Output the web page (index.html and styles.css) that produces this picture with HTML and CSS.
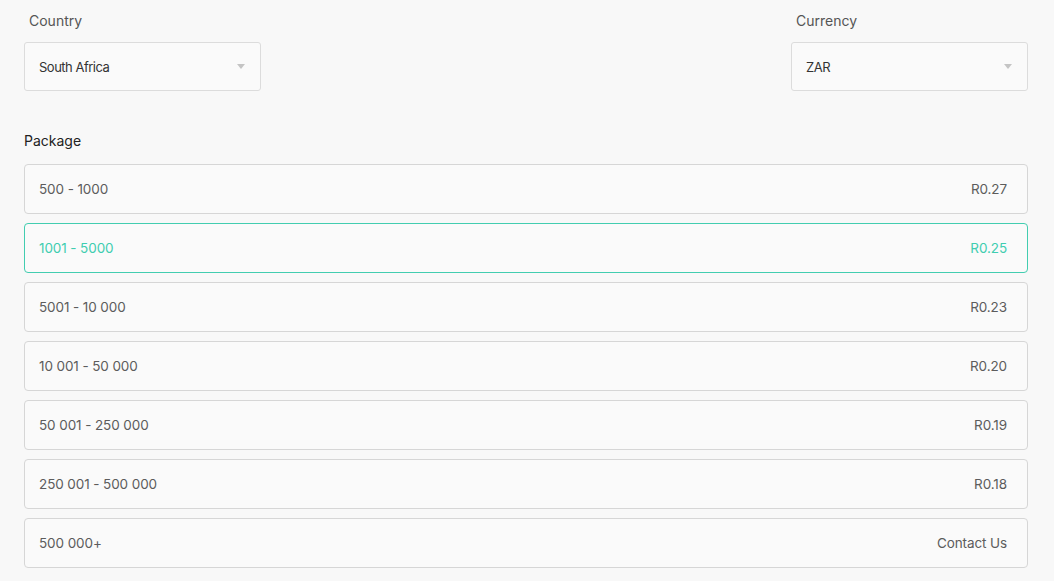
FILE: index.html
```html
<!DOCTYPE html>
<html>
<head>
<meta charset="utf-8">
<link rel="stylesheet" href="styles.css">
</head>
<body>
<div class="page">
  <div class="selects">
    <div class="field">
      <div class="label">Country</div>
      <div class="select">
        <span class="select-value">South Africa</span>
        <span class="caret"></span>
      </div>
    </div>
    <div class="field">
      <div class="label">Currency</div>
      <div class="select">
        <span class="select-value">ZAR</span>
        <span class="caret"></span>
      </div>
    </div>
  </div>
  <div class="package-label">Package</div>
  <div class="packages">
    <div class="pkg"><span>500 - 1000</span><span>R0.27</span></div>
    <div class="pkg active"><span>1001 - 5000</span><span>R0.25</span></div>
    <div class="pkg"><span>5001 - 10 000</span><span>R0.23</span></div>
    <div class="pkg"><span>10 001 - 50 000</span><span>R0.20</span></div>
    <div class="pkg"><span>50 001 - 250 000</span><span>R0.19</span></div>
    <div class="pkg"><span>250 001 - 500 000</span><span>R0.18</span></div>
    <div class="pkg"><span>500 000+</span><span>Contact Us</span></div>
  </div>
</div>
</body>
</html>
```
FILE: styles.css
```css
html, body {
  margin: 0;
  padding: 0;
  background: #f8f8f8;
}
body {
  font-family: "Inter", "Noto Sans", sans-serif;
  color: #555;
}
.page {
  padding: 11px 26px 0 24px;
}
.selects {
  display: flex;
  justify-content: space-between;
}
.field {
  width: 237px;
}
.label {
  font-size: 14px;
  color: #555;
  padding-left: 5px;
  height: 20px;
  line-height: 20px;
  margin-bottom: 11px;
}
.select {
  box-sizing: border-box;
  height: 49px;
  border: 1px solid #dcdcdc;
  border-radius: 3px;
  background: #fafafa;
  display: flex;
  align-items: center;
  justify-content: space-between;
  padding: 0 15px 0 14px;
  font-size: 13px;
  color: #333;
  letter-spacing: -0.5px;
}
.caret {
  width: 0;
  height: 0;
  border-left: 4px solid transparent;
  border-right: 4px solid transparent;
  border-top: 5px solid #c4c4c4;
}
.package-label {
  margin-top: 40px;
  font-size: 14px;
  color: #222;
  height: 20px;
  line-height: 20px;
  margin-bottom: 13px;
}
.packages {
  display: flex;
  flex-direction: column;
  gap: 9px;
}
.pkg {
  box-sizing: border-box;
  height: 50px;
  border: 1px solid #d6d6d6;
  border-radius: 4px;
  background: #fafafa;
  display: flex;
  align-items: center;
  justify-content: space-between;
  padding: 0 20px 0 14px;
  font-size: 13.5px;
  letter-spacing: -0.1px;
  color: #5c5c5c;
}
.pkg.active {
  border-color: #42cdb0;
  color: #3fcdb0;
}
```
